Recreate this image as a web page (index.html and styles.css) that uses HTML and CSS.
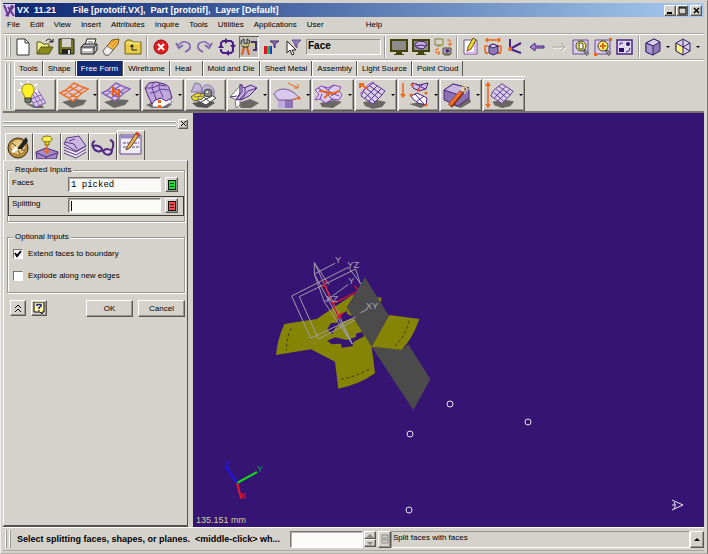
FILE: index.html
```html
<!DOCTYPE html>
<html lang="en">
<head>
    <meta charset="UTF-8">
    <meta name="viewport" content="width=device-width, initial-scale=1.0">
    <title>VX 11.21</title>
    <link rel="stylesheet" href="styles.css">
</head>
<body>
    <!-- Shared icon shapes -->
    <svg class="defs" aria-hidden="true">
        <symbol id="mesh" viewBox="0 0 30 28">
            <path d="M3 21l11-3 14 1-4 5-11 3z" fill="#6a6864"/>
            <path d="M1 12l6-3 8-7 6 3 8 3-6 4-9 8-6-4z" fill="#d5cbe4" stroke="currentColor" stroke-width="1.5"/>
            <path d="M6 9l6 4 7 4M11 6l6 3 6 4M5 14l6-4 9-6M10 17l6-4 9-6" fill="none" stroke="currentColor" stroke-width="1.5"/>
        </symbol>
        <symbol id="grid" viewBox="0 0 30 28">
            <path d="M6 21l14-2 9 2-4 5-9 2-8-3z" fill="#6a6864"/>
            <path d="M16 2l12 8-4 5-8 8L4 15l3-6z" fill="#d8cfe8" stroke="#5c3090"/>
            <path d="M13 5l12 9M10 8l11 9M7 11l11 10M20 5L8 17M24 8L12 20" fill="none" stroke="#5c3090"/>
        </symbol>
        <symbol id="cube" viewBox="0 0 18 18">
            <path d="M2 5l8-4 6 3v9l-7 4-7-3z" fill="#8f78b8" stroke="#37206b"/>
            <path d="M2 5l8-4 6 3-7 4z" fill="#d8d0ea" stroke="#37206b"/>
            <path d="M2 5l7 3v9l-7-3z" fill="#aa98cc" stroke="#37206b"/>
        </symbol>
        <symbol id="monitor" viewBox="0 0 18 18">
            <path d="M0 1h18v13h-6v2h2v1H4v-1h2v-2H0z" fill="#45430a"/>
            <path d="M2 3h14v9H2z" fill="#8d8b87"/>
        </symbol>
        <symbol id="lens" viewBox="0 0 18 18">
            <path d="M1 2h15v14H1z" fill="#d8cdea" stroke="#6a4a9c"/>
            <path d="M12 12l4 5" stroke="#555" stroke-width="3"/>
            <path d="M13 13l3 4" stroke="#ccc"/>
            <circle cx="9" cy="8" r="5" fill="#f9f06c" stroke="#454020"/>
        </symbol>
    </svg>

    <div class="window">
        <header class="title-bar">
            <svg class="logo" viewBox="0 0 12 13"><path d="M0 0h12v13H0z" fill="#d8c8ee"/><path d="M1 1l4 10L9 1M5 3l6 9M11 2l-8 10" fill="none" stroke="#64368f" stroke-width="2"/></svg>
            <span class="app-name">VX&nbsp; 11.21</span>
            <span>File [prototif.VX],&nbsp; Part [prototif],&nbsp; Layer [Default]</span>
            <div class="window-buttons">
                <button aria-label="Minimize"><svg viewBox="0 0 9 9"><path d="M1 7h5" stroke="#000" stroke-width="2"/></svg></button>
                <button aria-label="Maximize"><svg viewBox="0 0 9 9"><path d="M1 1h7v7H1zM1 2h7" fill="none" stroke="#000"/></svg></button>
                <button class="close" aria-label="Close"><svg viewBox="0 0 9 9"><path d="M2 2l5 5M7 2L2 7" stroke="#000" stroke-width="1.5"/></svg></button>
            </div>
        </header>

        <nav class="menu">
            <a href="#">File</a>
            <a href="#">Edit</a>
            <a href="#">View</a>
            <a href="#">Insert</a>
            <a href="#">Attributes</a>
            <a href="#">Inquire</a>
            <a href="#">Tools</a>
            <a href="#">Utilities</a>
            <a href="#">Applications</a>
            <a href="#">User</a>
            <a href="#" class="help">Help</a>
        </nav>

        <!-- Main toolbar -->
        <div class="toolbar">
            <span class="grip"></span>
            <div class="icons">
                <button aria-label="New"><svg viewBox="0 0 18 18"><path d="M3 1h8l4 4v12H3z" fill="#fff" stroke="#333"/><path d="M11 1v4h4" fill="none" stroke="#333"/></svg></button>
                <button aria-label="Open"><svg viewBox="0 0 18 18"><path d="M1 16V4h4l2 2h6v3" fill="#f0ee8a" stroke="#55530a"/><path d="M1 16l4-7h12l-4 7z" fill="#8b8a1e" stroke="#55530a"/><path d="M10 3c2-3 5-2 6 1m-3 0h4V1" fill="none" stroke="#111"/></svg></button>
                <button aria-label="Save"><svg viewBox="0 0 18 18"><path d="M1 1h15v15H1z" fill="#77761e" stroke="#222"/><path d="M4 1h9v8H4z" fill="#d5d2cb"/><path d="M4 11h9v5H4z" fill="#222"/><path d="M10 12h2v4h-2z" fill="#ddd"/></svg></button>
                <button aria-label="Print"><svg viewBox="0 0 18 18"><path d="M5 7l2-6h9l-2 6" fill="#fff" stroke="#222"/><path d="M8 4h5" stroke="#666"/><path d="M1 9l3-3h13v6l-3 4H1z" fill="#bbb" stroke="#222"/><path d="M1 9h13l3-3M14 9v7" fill="none" stroke="#222"/><path d="M3 12h9" stroke="#fff" stroke-width="2"/></svg></button>
                <button aria-label="Erase"><svg viewBox="0 0 18 18"><path d="M1 13l9-11 7-1-1 5-9 11H3z" fill="#f2bd48" stroke="#765510"/><path d="M1 13l4-5 6 4-4 5H3z" fill="#eee" stroke="#777"/><path d="M8 7L13 2M10 9l5-6" stroke="#e07a16"/></svg></button>
                <button aria-label="Up one folder"><svg viewBox="0 0 18 18"><path d="M1 4l2-2h4l2 2h8v12H1z" fill="#e7cb45" stroke="#77610c"/><path d="M2 5h14" stroke="#fff7a0"/><path d="M6 9l2-3 2 3z" fill="#222"/><path d="M8 8v4h5" fill="none" stroke="#222"/></svg></button>
            </div>
            <span class="divider"></span>
            <div class="icons">
                <button aria-label="Stop"><svg viewBox="0 0 18 18"><circle cx="9" cy="9" r="7" fill="#e61b1f" stroke="#931010"/><path d="M6 6l6 6M12 6l-6 6" stroke="#fff" stroke-width="2"/></svg></button>
                <button aria-label="Undo"><svg viewBox="0 0 18 18"><path d="M2 5l3 5 4-3M4 9c4-8 12-5 12 0 0 3-3 4-5 5" fill="none" stroke="#8468ad" stroke-width="2"/><path d="M5 8c4-5 10-3 10 1" fill="none" stroke="#dcd0f0"/></svg></button>
                <button aria-label="Redo"><svg viewBox="0 0 18 18"><path d="M16 5l-3 5-4-3M14 9C10 1 2 4 2 9c0 3 3 4 5 5" fill="none" stroke="#8468ad" stroke-width="2"/><path d="M13 8C9 3 3 5 3 9" fill="none" stroke="#dcd0f0"/></svg></button>
                <button aria-label="Regenerate"><svg viewBox="0 0 18 18"><path d="M8 3H5L3 5v3M10 3h3l2 2v2M15 10v3l-2 2h-3M8 15H5l-2-2v-2" fill="none" stroke="#4b1e88" stroke-width="2"/><path d="M7 0l4 3-4 3zM12 7h6l-3 4zM11 12v6l-4-3zM0 10l3-4 3 4z" fill="#4b1e88"/></svg></button>
                <button class="pressed" aria-label="Pick tools"><svg viewBox="0 0 18 18"><path d="M4 9l-2 8M7 9l2 8" stroke="#dc5817" stroke-width="2"/><path d="M1 3l3-2v4l3 1V1l3 2-2 6H3L1 6z" fill="#aaa" stroke="#333"/><path d="M1 7h15" stroke="#e4d43a"/><path d="M11 4h5v8h-3" fill="none" stroke="#48346c" stroke-width="2"/></svg></button>
                <button aria-label="Color filter"><svg viewBox="0 0 18 18"><path d="M2 8h3v8H2z" fill="#e2102c"/><path d="M5 8h3v8H5z" fill="#17c33c"/><path d="M8 8h2v8H8z" fill="#2335d1"/><path d="M8 3h9l-4 3v4l-1-1V6z" fill="#9078b6" stroke="#48286f"/></svg></button>
                <button aria-label="Pick filter"><svg viewBox="0 0 18 18"><path d="M8 2h9l-4 4v4l-2-2V6z" fill="#9078b6" stroke="#6b5090"/><path d="M3 3v12l3-3 2 5 2-1-2-4h4z" fill="#fff" stroke="#222"/></svg></button>
            </div>
            <output class="filter-field">Face</output>
            <span class="divider"></span>
            <div class="icons">
                <button aria-label="Blank"><svg><use href="#monitor"/></svg></button>
                <button aria-label="Show part"><svg viewBox="0 0 18 18"><use href="#monitor" width="18" height="18"/><path d="M3 6l4-3 6 1 2 3-4 4-5-1-3-2z" fill="#c2aee0" stroke="#41206f"/><path d="M4 8l5-1 5 1" stroke="#41206f" fill="none"/></svg></button>
                <button aria-label="Swap display"><svg viewBox="0 0 18 18"><path d="M1 1h8v6H1zM3 8h4" fill="none" stroke="#858326"/><path d="M13 2h3v5m-2-2l2 3 2-3M5 11H2v4h4m-2-2l2 2-2 2" fill="none" stroke="#ec6b19"/><path d="M9 10h8v6H9zM10 17h6" fill="#b09bce" stroke="#55531a"/><path d="M11 12l3-1 2 2-3 2z" fill="#4c267c"/></svg></button>
            </div>
            <span class="divider"></span>
            <div class="icons">
                <button aria-label="Sketch"><svg viewBox="0 0 18 18"><path d="M2 2h13v14H2z" fill="#fff" stroke="#6d5495"/><path d="M13 4v11H4" fill="none" stroke="#d9b4f0" stroke-width="2"/><path d="M5 13l1-4 5-9 3 2-5 9z" fill="#f3d829" stroke="#61521a"/><path d="M5 10l3 2-3 2z" fill="#dd681b"/></svg></button>
                <button aria-label="Rotate part"><svg viewBox="0 0 18 18"><path d="M2 2h14M4 0L2 2l2 2M14 0l2 2-2 2M4 8H1v5l2 3M14 8h3v5l-2 3M1 15h3M17 15h-3" fill="none" stroke="#ed6616" stroke-width="1.5"/><path d="M5 8l4-2 5 2v7l-5 2-4-2z" fill="#8f78b8" stroke="#37206b"/><path d="M5 8l4-2 5 2-5 2z" fill="#d8d0ea" stroke="#37206b"/></svg></button>
                <button aria-label="Axes"><svg viewBox="0 0 18 18"><path d="M4 1v10l11-6M4 11l11 4" fill="none" stroke="#4b2483" stroke-width="2"/><circle cx="4" cy="11" r="2" fill="#f57120"/></svg></button>
                <button aria-label="Previous view"><svg viewBox="0 0 18 18"><path d="M2 9l5-4v3h9v2H7v3z" fill="#a58bd0" stroke="#4b2483"/></svg></button>
                <button aria-label="Next view"><svg viewBox="0 0 18 18"><path d="M3 10h13M12 6l4 4-4 4" fill="none" stroke="#fff"/><path d="M2 9h13M11 5l4 4-4 4" fill="none" stroke="#a8a49f"/></svg></button>
                <button aria-label="Zoom"><svg viewBox="0 0 18 18"><use href="#lens" width="18" height="18"/><path d="M7 5h3l1 1v5H7z" fill="#fff" stroke="#454020"/></svg></button>
                <button aria-label="Zoom all"><svg viewBox="0 0 18 18"><use href="#lens" width="18" height="18"/><path d="M9 5v6M6 8h6" stroke="#e9651c" stroke-width="2"/><path d="M15 0h3v3h-3zM0 15h3v3H0z" fill="#ed6616"/></svg></button>
                <button aria-label="Fit view"><svg viewBox="0 0 18 18"><path d="M1 2h15v14H1z" fill="#e1d9ee" stroke="#4b2483" stroke-width="1.5"/><path d="M3 10h5v4H3z" fill="#321067"/><path d="M4 7V5h3M10 14l3-1 1-3" fill="none" stroke="#4b2483"/><circle cx="12" cy="6" r="2" fill="#321067"/></svg></button>
            </div>
            <span class="divider"></span>
            <div class="icons shading">
                <button aria-label="Shaded"><svg><use href="#cube"/></svg></button>
                <span class="arrow"></span>
                <button aria-label="Standard view"><svg viewBox="0 0 18 18"><path d="M2 5l7-4 7 4v8l-7 4-7-4z" fill="#d8d0ea" stroke="#37206b"/><path d="M2 5l7 4v8l-7-4z" fill="#fff87a" stroke="#37206b"/><path d="M9 1v8l7-4M9 9l7 4" fill="none" stroke="#37206b"/></svg></button>
                <span class="arrow"></span>
            </div>
        </div>

        <!-- Free form ribbon -->
        <div class="ribbon">
            <span class="grip"></span>
            <div class="ribbon-body">
                <div class="tabs">
                    <button>Tools</button>
                    <button>Shape</button>
                    <button class="active">Free Form</button>
                    <button>Wireframe</button>
                    <button class="wide">Heal</button>
                    <button>Mold and Die</button>
                    <button>Sheet Metal</button>
                    <button>Assembly</button>
                    <button>Light Source</button>
                    <button>Point Cloud</button>
                </div>
                <div class="tools">
                    <button aria-label="Quick face"><svg viewBox="0 0 30 28"><path d="M10 23l8 4 10 0-2-3z" fill="#6a6864"/><path d="M13 14l9-5 8 13-11 4z" fill="#d5cbe4" stroke="#8b62b9"/><path d="M15 18l10-4M17 22l11-4M16 12l7 12M19 11l8 12" stroke="#8b62b9"/><path d="M2 9h3M4 2l3 2M12 0v2M21 3l-3 2M22 10h-3" stroke="#fff" stroke-width="2"/><path d="M8 14C4 9 6 3 12 3s8 6 4 11l-1 4h-6z" fill="#ffef28" stroke="#9a8c12"/><path d="M9 17h6v4l-2 1h-2l-2-1z" fill="#777" stroke="#333"/></svg></button>
                    <button aria-label="UV face"><svg class="orange"><use href="#mesh"/></svg><span class="arrow"></span></button>
                    <button aria-label="N-sided face"><svg class="violet" viewBox="0 0 30 28"><use href="#mesh" width="30" height="28"/><path d="M12 15V8l6 7V8" fill="none" stroke="#ed5d10" stroke-width="2"/></svg><span class="arrow"></span></button>
                    <button aria-label="Loft face"><svg viewBox="0 0 30 28"><path d="M2 24l9-4 17 3-5 4H8z" fill="#6a6864"/><path d="M7 20l2 6h10l9-5-4-6z" fill="#fff" stroke="#8b78a8"/><path d="M1 7l4-5 7-1 8 2c4 1 5 3 6 7l2 7-6 3-5-3-6 2-3 4-4-8c-1-4-2-5-3-8z" fill="#bda9da" stroke="#502080"/><path d="M10 2C6 5 9 9 12 18M16 2c-3 5 1 8 3 14M2 7h6l7-3 7 1M6 12l6-1 5-3 8 1" fill="none" stroke="#6b3b9b"/><path d="M14 19h3v3h-3zM14 24h3v3h-3z" fill="#ed6616"/></svg><span class="arrow"></span></button>
                    <button aria-label="Trim face"><svg viewBox="0 0 30 28"><path d="M5 22l18-3 5 3-8 5-10-1z" fill="#555"/><path d="M4 11L8 2l5 1 3 8zM14 11c1-9 10-9 13-2v7z" fill="#c1b2d8" stroke="#8677a3"/><path d="M9 19l12-7 8 5-10 7z" fill="#fff" stroke="#444"/><path d="M14 21l11-6M15 15l8 6" stroke="#444"/><path d="M4 16l6-4 9 1-4 5-8 2z" fill="#f4df1b" stroke="#555"/><path d="M7 16l10-1M14 13l-4 6" stroke="#777"/><circle cx="21" cy="12" r="4" fill="#888" stroke="#444"/><circle cx="20" cy="11" r="1" fill="#fff"/></svg></button>
                    <button aria-label="Offset face"><svg viewBox="0 0 30 28"><path d="M9 22l12-4 9 4-8 5H12z" fill="#6a6864"/><path d="M1 16l10-11v19l-4 3-1-9z" fill="#fff" stroke="#777"/><path d="M11 3l4 4 7-3 6 3-8 8-6 3-7 1 4-7z" fill="#cabdde" stroke="#502080"/><path d="M13 3v8l-6 8M16 7v5l-5 6M28 7l-9 3-7 9M1 16l7-1" fill="none" stroke="#593089"/></svg><span class="arrow"></span></button>
                    <button aria-label="Extend face"><svg viewBox="0 0 30 28"><path d="M6 15l15 2v10H6z" fill="#8f72b7"/><path d="M6 15l7 2v10H6z" fill="#beaade"/><path d="M2 13c5-8 18-6 25 4l-8 2H6z" fill="#d7c8ed" stroke="#76518f"/><path d="M16 2l10 5M22 7h4V3M19 19l8-2" fill="none" stroke="#ed6616"/><circle cx="27" cy="17" r="1.5" fill="#ed5d10"/></svg><span class="arrow"></span></button>
                    <button aria-label="Join faces"><svg viewBox="0 0 30 28"><path d="M6 22l14-3 8 2-9 6-11-1z" fill="#6a6864"/><path d="M1 9l6-4 7 2 6-3 7 2-2 4 3 4-3 5-7-1-6 4-6-4-5 1 4-6z" fill="#dacdf0" stroke="#8c45c6"/><path d="M4 7l8 5 7 7M10 6l6 5 9 4M8 13l-2 5M20 4l-6 5M25 10l-8 5" fill="none" stroke="#6b3bb0"/><path d="M5 10l8 1 5 2 7-3M16 12l-6 5" fill="none" stroke="#ed6616" stroke-width="2"/></svg><span class="arrow"></span></button>
                    <button aria-label="Move face"><svg viewBox="0 0 30 28"><path d="M3 13l9-10 5-2" fill="none" stroke="#b14be0"/><use href="#grid" width="30" height="28"/><path d="M3 3l8 5M3 7V3h4" fill="none" stroke="#ed6616" stroke-width="2"/></svg><span class="arrow"></span></button>
                    <button aria-label="Project face"><svg viewBox="0 0 30 28"><path d="M9 23l12-2 7 2-7 4z" fill="#6a6864"/><path d="M12 2l7 2 9-2-2 6-7 2-6-3z" fill="#cfbceb" stroke="#502080"/><path d="M11 15l6-3 10 5-1 7-8-2-5-4z" fill="#fff" stroke="#502080"/><path d="M16 3l9 5M23 3l-6 6M15 13l9 10M24 15l-8 6" stroke="#502080"/><path d="M3 2v14M1 13l2 3 2-3" fill="none" stroke="#ed6616" stroke-width="1.5"/><circle cx="12" cy="4" r="1.5" fill="#ed5d10"/><circle cx="11" cy="14" r="1.5" fill="#ed5d10"/><circle cx="19" cy="9" r="1.5" fill="#ed5d10"/><circle cx="26" cy="12" r="1.5" fill="#ed5d10"/><circle cx="26" cy="24" r="1.5" fill="#ed5d10"/></svg><span class="arrow"></span></button>
                    <button aria-label="Face wizard"><svg viewBox="0 0 30 28"><path d="M9 24l18-8 2 5-10 6z" fill="#6a6864"/><path d="M2 9l9-6 16 4v10L16 25 2 19z" fill="#8d70b4" stroke="#4b2a78"/><path d="M2 9l9-6 16 4-10 7z" fill="#c7b6df" stroke="#4b2a78"/><path d="M8 25l12-14" stroke="#842e0d" stroke-width="5"/><path d="M8 24L19 11" stroke="#f4702a" stroke-width="3"/><path d="M23 3v10M18 8h10M20 5l6 6M26 5l-6 6" stroke="#fff39a"/><circle cx="23" cy="8" r="1" fill="#555"/></svg><span class="arrow"></span></button>
                    <button aria-label="Stretch face"><svg viewBox="0 0 30 28"><use href="#grid" x="2" width="28" height="28"/><path d="M3 2v24M1 5l2-3 2 3M1 23l2 3 2-3" fill="none" stroke="#ed6616" stroke-width="1.5"/></svg><span class="arrow"></span></button>
                </div>
            </div>
        </div>

        <main class="workspace">
            <!-- Command panel -->
            <aside class="panel">
                <div class="panel-head">
                    <span class="panel-grip"></span>
                    <button aria-label="Close panel"><svg viewBox="0 0 7 7"><path d="M1 1l5 5M6 1L1 6" stroke="#000"/></svg></button>
                </div>
                <div class="panel-tabs">
                    <button aria-label="History"><svg viewBox="0 0 24 24"><circle cx="11" cy="13" r="10" fill="#b98c38" stroke="#33291c"/><circle cx="11" cy="12" r="7" fill="#e5c98b"/><path d="M5 8l4 3M4 15h5M13 19l-2-4M18 15h-4" stroke="#59451a"/><path d="M10 14l9-12 2 4-6 8z" fill="#222"/><path d="M5 17l5-4" stroke="#fff" stroke-width="3"/></svg></button>
                    <button aria-label="Stamp"><svg viewBox="0 0 24 24"><path d="M1 17l10-4 12 4-2 7H2z" fill="#a58ac8" stroke="#4d287b"/><path d="M2 18l9 4 11-4M11 22v2" fill="none" stroke="#4d287b"/><path d="M12 10v8M9 15l3 3 3-3" fill="none" stroke="#ed6616" stroke-width="1.5"/><path d="M10 6h4v4h-4z" fill="#f1db26" stroke="#776d10"/><ellipse cx="12" cy="4" rx="5" ry="3" fill="#fff04d" stroke="#776d10"/></svg></button>
                    <button aria-label="Layers"><svg viewBox="0 0 24 24"><path d="M1 18l12 5 10-6M1 15l12 5 10-6M1 12l12 5 10-6" fill="#eee8f8" stroke="#5b3986"/><path d="M1 9l3-6 12-2 7 10-10 5z" fill="#c9b7e2" stroke="#5b3986"/><path d="M2 7l9 2 3 5M6 6l6-2" fill="none" stroke="#5b3986"/></svg></button>
                    <button aria-label="Glasses"><svg viewBox="0 0 24 24"><path d="M4 6c-3 1-3 4-2 6M19 5c4 1 4 5 2 10" fill="none" stroke="#4d287b" stroke-width="2"/><path d="M2 11c3-1 8 0 9 3-1 4-8 3-9-3zM12 16c3-3 7-2 9 0-1 5-7 5-9 0z" fill="#d5c7e8" stroke="#4d287b" stroke-width="2"/></svg></button>
                    <button class="active" aria-label="Command inputs"><svg viewBox="0 0 24 24"><path d="M1 3h21v19H1z" fill="#efedf6" stroke="#5f4591"/><path d="M2 5h19" stroke="#9d88c6" stroke-width="3"/><path d="M4 11h8M15 11h5M4 15h5M13 15h7" stroke="#5f4591" stroke-dasharray="3 1"/><path d="M8 15l9-14 3 2-9 13-4 2z" fill="#ebae53" stroke="#6c461c"/><path d="M17 1l3 2" stroke="#d23c2c" stroke-width="3"/></svg></button>
                </div>
                <form class="panel-page">
                    <fieldset class="required">
                        <legend>Required Inputs</legend>
                        <div class="field">
                            <label for="faces">Faces</label>
                            <input type="text" id="faces" value="1 picked">
                            <button type="button" class="pick" aria-label="Faces list"><svg viewBox="0 0 8 10"><path d="M0 0h8v10H0z" fill="#111"/><path d="M1 1h6v8H1z" fill="#18e038"/><path d="M2 3.5h4M2 6.5h4" stroke="#064d0e"/></svg></button>
                        </div>
                        <div class="field current">
                            <label for="splitting">Splitting</label>
                            <input type="text" id="splitting" class="caret">
                            <button type="button" class="pick" aria-label="Splitting list"><svg viewBox="0 0 8 10"><path d="M0 0h8v10H0z" fill="#111"/><path d="M1 1h6v8H1z" fill="#ee5050"/><path d="M2 3.5h4M2 6.5h4" stroke="#5b1010"/></svg></button>
                        </div>
                    </fieldset>
                    <fieldset class="optional">
                        <legend>Optional Inputs</legend>
                        <label class="check"><input type="checkbox" checked> Extend faces to boundary</label>
                        <label class="check"><input type="checkbox"> Explode along new edges</label>
                    </fieldset>
                    <div class="actions">
                        <button type="button" class="small" aria-label="Collapse"><svg viewBox="0 0 12 12"><path d="M3 6l3-3 3 3M3 10l3-3 3 3" fill="none" stroke="#000"/></svg></button>
                        <button type="button" class="small" aria-label="Help"><svg viewBox="0 0 12 12"><path d="M1 0h10v10H9v2l-2-2H1z" fill="#ffffa0" stroke="#000"/><path d="M4 4V2.500h4V4L6 5.500V7M6 8v1" fill="none" stroke="#2020a0" stroke-width="1.5"/></svg></button>
                        <button type="button" class="ok">OK</button>
                        <button type="button">Cancel</button>
                    </div>
                </form>
            </aside>

            <!-- 3D view -->
            <section class="viewport">
                <svg class="scene" viewBox="193 113 511 414" preserveAspectRatio="xMinYMin slice">
                    <g transform="translate(265 250) scale(.3333)">
                        <path d="M58 222l97-15 107-72 88 8-30 147 10 80q-50 35-110 46l-10-81-72-37-105 17q5-50 25-93z" fill="#868405"/>
                        <path d="M187 238l10-18 18-2 10-23 20-12 3 10 22 8-36 14-24 20-8 18zM187 272l23-10 35 8 28-9 0-10 18-6 7 14-32 16-4 14-32 4-2-12-28 2z" fill="#361473"/>
                        <path d="M78 235q-14 32-14 66M228 388q52-10 90-34" class="dash"/>
                        <path d="M300 82l70 113-50 95-75-118zM320 290l90 10 20-17 66 105-51 92z" fill="#4b4b4b"/>
                        <path d="M372 195l91 12q-18 55-53 93l-90-10z" fill="#868405"/>
                        <path d="M432 212q-10 45-42 76" class="dash"/>
                        <g class="datum">
                            <path d="M80 138l170-86M80 138l57 127 135-64M103 140l169-83 14 45M103 140l57 127 110-57M250 52l38 50"/>
                            <path d="M148 38v34l30 84 84 126L148 38l44 66M148 72l62-32M178 156l72-53M148 72l114 210M286 188l22-10"/>
                        </g>
                        <path d="M175 98l47 105M205 160l70-34M268 108l10 10M218 205l18-18" class="x-line"/>
                        <text x="210" y="39">Y</text>
                        <text x="247" y="54">YZ</text>
                        <text x="250" y="103">Y</text>
                        <text x="184" y="155">XZ</text>
                        <text x="302" y="178">XY</text>
                        <text x="170" y="112" class="red">Z</text>
                        <text x="212" y="206" class="red">X</text>
                    </g>
                    <g class="markers">
                        <circle cx="450" cy="404" r="3"/>
                        <circle cx="528" cy="422" r="3"/>
                        <circle cx="410" cy="434" r="3"/>
                        <circle cx="409" cy="510" r="3"/>
                        <path d="M672 500l11 5-11 5M674 502q3 3 0 7M672 505h3"/>
                    </g>
                    <path d="M237 483l20-11" stroke="#10dc10" stroke-width="2"/>
                    <path d="M237 483l-11-16" stroke="#1818ef" stroke-width="2"/>
                    <path d="M237 483l4 15" stroke="#ee1520" stroke-width="2"/>
                    <g class="triad">
                        <text x="257" y="472" fill="#149b3f">Y</text>
                        <text x="225" y="468" fill="#1818ef">Z</text>
                        <text x="240" y="499" fill="#ee1520">X</text>
                        <text x="196" y="523" fill="#d0d29a">135.151 mm</text>
                    </g>
                </svg>
            </section>
        </main>

        <footer class="status">
            <span class="grip"></span>
            <span class="prompt">Select splitting faces, shapes, or planes.&nbsp; &lt;middle-click&gt; wh...</span>
            <input type="text" aria-label="Command value">
            <div class="spin">
                <button aria-label="Increase"><span></span></button>
                <button aria-label="Decrease"><span class="down"></span></button>
            </div>
            <button class="list" aria-label="Options"><svg viewBox="0 0 8 10"><path d="M1 1h6v8H1zM2 4h4M2 6h4" fill="none" stroke="#8a8782"/></svg></button>
            <span class="hint">Split faces with faces</span>
            <button class="expand" aria-label="Show messages"><span></span></button>
        </footer>
    </div>
</body>
</html>
```
FILE: styles.css
```css
* {
    box-sizing: border-box;
}

body {
    margin: 0;
    background-color: #d5d2cb;
    font-family: "Liberation Sans", Arial, sans-serif;
    font-size: 8px;
    line-height: 12px;
    color: #000;
}

button, input {
    margin: 0;
    padding: 0;
    font: inherit;
    color: inherit;
}

button {
    display: flex;
    align-items: center;
    justify-content: center;
    background-color: #d5d2cb;
    border: 1px solid;
    border-color: #fff #5a5854 #5a5854 #fff;
    box-shadow: inset -1px -1px #9b9893;
}

svg {
    display: block;
    flex: none;
}

.defs {
    display: none;
}

.window {
    display: flex;
    flex-direction: column;
    height: 100vh;
    padding: 2px 3px 2px 2px;
    border: 1px solid;
    border-color: #d5d2cb #77746f #b0ada8 #eee;
}

.title-bar {
    display: flex;
    align-items: center;
    height: 14px;
    background: linear-gradient(to right, #0c2570, #a6caf0);
    color: #fff;
    font-weight: bold;
    font-size: 9px;
}

.logo {
    width: 12px;
    height: 13px;
    margin-right: 2px;
}

.app-name {
    margin-right: 17px;
}

.window-buttons {
    display: flex;
    margin-left: auto;
    padding-right: 2px;
}

.window-buttons button {
    width: 12px;
    height: 11px;
}

.window-buttons svg {
    width: 9px;
    height: 9px;
}

.window-buttons .close {
    margin-left: 2px;
}

.menu {
    display: flex;
    align-items: center;
    gap: 10px;
    height: 17px;
    padding-left: 4px;
    border-bottom: 1px solid #aaa7a2;
}

.menu a {
    color: inherit;
    text-decoration: none;
}

.menu .help {
    margin-left: 32px;
}

.toolbar {
    display: flex;
    align-items: center;
    gap: 3px;
    height: 26px;
    padding-left: 2px;
    border-top: 1px solid #fff;
    border-bottom: 1px solid #aaa7a2;
}

.grip {
    flex: none;
    align-self: stretch;
    width: 5px;
    margin: 2px 0;
    border: solid #fff;
    border-width: 0 1px;
    box-shadow: 1px 0 #999, inset 1px 0 #999;
}

.icons {
    display: flex;
    align-items: center;
    gap: 2px;
}

.toolbar button {
    width: 20px;
    height: 22px;
    border: 0;
    box-shadow: none;
}

.toolbar button svg {
    width: 18px;
    height: 18px;
}

.toolbar .pressed {
    background-color: #c2bfba;
    box-shadow: inset 1px 1px #666, inset -1px -1px #fff;
}

.divider {
    width: 2px;
    height: 22px;
    border-left: 1px solid #999;
    border-right: 1px solid #fff;
}

.filter-field {
    width: 75px;
    height: 16px;
    padding: 0 1px;
    border: 1px solid;
    border-color: #96938e #fff #fff #96938e;
    font-size: 10px;
    font-weight: bold;
}

.arrow {
    flex: none;
    border: 2px solid transparent;
    border-top-color: #000;
    border-bottom: 0;
}

.icons.shading {
    gap: 3px;
}

.ribbon {
    display: flex;
    gap: 4px;
    height: 53px;
    padding-left: 2px;
    border-top: 1px solid #fff;
    border-bottom: 2px solid #77746f;
}

.ribbon-body {
    flex: 1;
}

.tabs {
    display: flex;
    height: 15px;
}

.tabs button {
    padding: 0 4px;
    border-width: 0 1px 0 1px;
    box-shadow: inset 0 1px #eee;
    white-space: nowrap;
}

.tabs .active {
    background-color: #102a75;
    color: #fff;
    box-shadow: none;
}

.tabs .wide {
    padding-right: 10px;
}

.tools {
    display: grid;
    grid-template-columns: repeat(12, 1fr);
    gap: 1px;
    width: 74%;
    padding-top: 2px;
    border-top: 1px solid #fff;
}

.tools button {
    justify-content: flex-start;
    gap: 4px;
    height: 32px;
    padding-left: 1px;
}

.tools svg {
    width: 30px;
    height: 28px;
}

.orange {
    color: #f07020;
}

.violet {
    color: #8b62b9;
}

.workspace {
    display: flex;
    flex: 1;
    min-height: 0;
}

.panel {
    display: flex;
    flex-direction: column;
    width: 185px;
    margin: 5px 5px 0 0;
    border-bottom: 1px solid #55534f;
}

.panel-head {
    display: flex;
    align-items: center;
    gap: 2px;
    height: 11px;
}

.panel-grip {
    flex: 1;
    height: 5px;
    border: solid #fff;
    border-width: 1px 0;
    box-shadow: 0 1px #999, inset 0 1px #999;
}

.panel-head button {
    width: 10px;
    height: 10px;
}

.panel-head svg {
    width: 7px;
    height: 7px;
}

.panel-tabs {
    display: flex;
    align-items: flex-end;
    height: 31px;
    padding: 0 0 0 2px;
}

.panel-tabs button {
    width: 28px;
    height: 27px;
    border-bottom: 0;
    box-shadow: none;
}

.panel-tabs .active {
    height: 30px;
    padding-bottom: 4px;
}

.panel-tabs svg {
    width: 24px;
    height: 24px;
}

.panel-page {
    flex: 1;
    padding: 3px 2px 0 3px;
    border: 1px solid;
    border-color: #eee #55534f #55534f #fff;
}

fieldset {
    min-width: 0;
    margin: 0;
    padding: 0;
    border: 1px solid #9b9893;
    box-shadow: 1px 1px #fff, inset 1px 1px #fff;
}

legend {
    margin-left: 5px;
    padding: 0 2px;
    background-color: #d5d2cb;
}

.field {
    display: flex;
    align-items: flex-start;
    gap: 4px;
    height: 20px;
    padding: 1px 2px 0 4px;
}

.field label {
    width: 52px;
}

.field input,
.status input {
    border: 1px solid;
    border-color: #77746f #fff #fff #77746f;
    background-color: #fafaf7;
    box-shadow: inset 1px 1px #b8b5b0;
}

.field input {
    width: 93px;
    height: 15px;
    padding-left: 2px;
    font-family: "Liberation Mono", "Courier New", monospace;
    font-size: 9px;
}

.field .caret {
    background-image: linear-gradient(#000, #000);
    background-size: 1px 10px;
    background-position: 2px 2px;
    background-repeat: no-repeat;
}

.field.current {
    border: 1px solid #3c3a37;
    padding: 1px 1px 0 3px;
}

.pick {
    width: 13px;
    height: 15px;
}

.pick svg {
    width: 8px;
    height: 10px;
}

.required {
    height: 58px;
}

.optional {
    height: 62px;
    margin-top: 9px;
}

.check {
    display: flex;
    align-items: center;
    gap: 5px;
    height: 22px;
    padding-left: 5px;
}

.check input {
    appearance: none;
    width: 10px;
    height: 10px;
    border: 1px solid;
    border-color: #77746f #fff #fff #77746f;
    background-color: #fff;
}

.check input:checked {
    background-image: url("data:image/svg+xml,%3Csvg xmlns='http://www.w3.org/2000/svg' viewBox='0 0 8 8'%3E%3Cpath d='M1 3l2 3 4-5' fill='none' stroke='%23000' stroke-width='2'/%3E%3C/svg%3E");
}

.actions {
    display: flex;
    gap: 5px;
    padding: 7px 0 0 3px;
}

.actions button {
    width: 47px;
    height: 17px;
}

.actions .small {
    width: 16px;
    height: 16px;
}

.actions .small svg {
    width: 12px;
    height: 12px;
}

.actions .ok {
    margin-left: auto;
}

.viewport {
    flex: 1;
    min-width: 0;
    overflow: hidden;
    background-color: #361473;
}

.scene {
    width: 100%;
    height: 100%;
    font-size: 28px;
    fill: #a9a4b5;
}

.datum {
    fill: none;
    stroke: #a39dae;
    stroke-width: 3px;
}

.dash {
    fill: none;
    stroke: #3d3c1c;
    stroke-width: 3px;
    stroke-dasharray: 9 7;
}

.x-line {
    fill: none;
    stroke: #d81525;
    stroke-width: 4px;
}

.red {
    fill: #d81525;
}

.markers {
    fill: none;
    stroke: #e8e5ef;
}

.triad {
    font-size: 9px;
}

.status {
    display: flex;
    align-items: center;
    height: 24px;
    padding-left: 2px;
    border-top: 1px solid #fff;
    border-bottom: 1px solid #aaa7a2;
}

.prompt {
    width: 280px;
    padding-left: 7px;
    font-size: 9px;
    font-weight: bold;
    white-space: nowrap;
}

.status input {
    width: 73px;
    height: 17px;
}

.spin {
    display: flex;
    flex-direction: column;
    margin: 0 2px 0 1px;
}

.spin button {
    width: 12px;
    height: 8px;
}

.spin span,
.expand span {
    border: 3px solid transparent;
    border-top: 0;
    border-bottom-color: #8a8782;
}

.spin .down {
    transform: rotate(180deg);
}

.list {
    width: 13px;
    height: 17px;
}

.list svg {
    width: 8px;
    height: 10px;
}

.hint {
    flex: 1;
    height: 17px;
    padding-left: 1px;
    border: 1px solid;
    border-color: #96938e #fff #fff #96938e;
}

.expand {
    width: 14px;
    height: 17px;
}

.expand span {
    border-bottom-color: #000;
}
```
